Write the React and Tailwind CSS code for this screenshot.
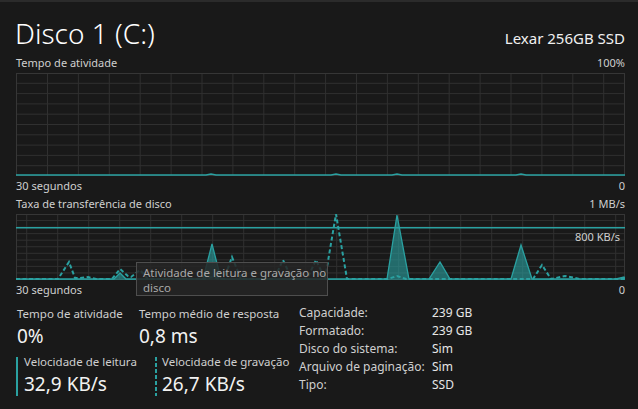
import React from "react";

const TEAL = "#2aa1a1";

function Chart1() {
  const W = 609, H = 103;
  const vx = Array.from({ length: 19 }, (_, k) => 31.5 + 30.9 * k);
  const hy = Array.from({ length: 9 }, (_, k) => 10.3 * (k + 1));
  return (
    <svg width={W} height={H} className="block">
      {vx.map((x, i) => (
        <line key={"v" + i} x1={x} x2={x} y1={0} y2={H} stroke="#303030" strokeWidth="1" />
      ))}
      {hy.map((y, i) => (
        <line key={"h" + i} x1={0} x2={W} y1={y} y2={y} stroke="#303030" strokeWidth="1" />
      ))}
      <rect x="0.5" y="0.5" width={W - 1} height={H - 1} fill="none" stroke="#363636" />
      <polyline
        points="0,102 190,102 195,101 200,102 315,102 320,101 325,102 376,102 381,101 386,102 500,102 505,101 510,102 609,102"
        fill="rgba(42,161,161,0.5)"
        stroke={TEAL}
        strokeWidth="1.3"
      />
    </svg>
  );
}

function Chart2() {
  const W = 609, H = 66;
  const vx = Array.from({ length: 20 }, (_, k) => 10.7 + 31 * k);
  const hy = Array.from({ length: 9 }, (_, k) => 6.55 * (k + 1));
  const dashed =
    "0,65 42,65 53,48 59,64 64,64 72,63 80,65 96,65 104,55 112,62 115,63 124,56 132,65 189,65 196,63 204,65 208,65 216,43 225,65 258,65 267,46 276,65 291,65 300,46 309,65 320,0 331,65 372,65 381,62 390,65 517,65 526,51 535,65 549,62 564,65 609,65";
  const solid =
    "0,65 98,65 104,59 110,65 187,65 196,30 205,65 371,65 381,1 393,65 413,65 424,48 434,65 495,65 505,31 516,65 600,65 608,63 609,65";
  return (
    <svg width={W} height={H} className="block">
      {vx.map((x, i) => (
        <line key={"v" + i} x1={x} x2={x} y1={0} y2={H} stroke="#303030" strokeWidth="1" />
      ))}
      {hy.map((y, i) => (
        <line key={"h" + i} x1={0} x2={W} y1={y} y2={y} stroke="#303030" strokeWidth="1" />
      ))}
      <rect x="0.5" y="0.5" width={W - 1} height={H - 1} fill="none" stroke="#363636" />
      <line x1="0" x2={W} y1="13.7" y2="13.7" stroke={TEAL} strokeWidth="1.6" />
      <polygon points={solid + " 609,66 0,66"} fill="rgba(42,161,161,0.6)" stroke="none" />
      <polyline points={solid} fill="none" stroke={TEAL} strokeWidth="1.3" />
      <polyline points={dashed} fill="none" stroke={TEAL} strokeWidth="2" strokeDasharray="4 2.5" />
    </svg>
  );
}

export default function App() {
  return (
    <div
      className="w-[638px] h-[409px] overflow-hidden bg-[#191919] border-t-2 border-[#2b2b2b] pl-[16px] pr-[13px] text-[#cfcfcf]"
      style={{ fontFamily: '"Noto Sans", "Open Sans", sans-serif' }}
    >
      {/* Header */}
      <div className="flex items-baseline justify-between pt-[15px]">
        <div className="text-[28px] leading-[32px] font-light text-white -ml-[1px]">Disco 1 (C:)</div>
        <div className="text-[15px] leading-[18px] text-[#f0f0f0]">Lexar 256GB SSD</div>
      </div>

      <div className="mt-[8px] flex justify-between text-[11px] leading-[12px]">
        <span>Tempo de atividade</span>
        <span>100%</span>
      </div>
      <div className="mt-[4px]">
        <Chart1 />
      </div>
      <div className="mt-[3.5px] flex justify-between text-[11px] leading-[12px]">
        <span>30 segundos</span>
        <span>0</span>
      </div>

      <div className="mt-[6px] flex justify-between text-[11px] leading-[12px]">
        <span>Taxa de transferência de disco</span>
        <span>1 MB/s</span>
      </div>
      <div className="relative mt-[4.5px]">
        <Chart2 />
        <div className="absolute right-[5px] top-[17px] text-[11px] leading-[12px]">800 KB/s</div>
        <div className="absolute left-[120px] top-[48px] w-[192px] h-[34px] bg-[rgba(38,38,38,0.85)] border border-[#4e4e4e] px-[6px] pt-[2px] text-[11.5px] leading-[15px] text-[#a9a9a9] whitespace-nowrap">
          Atividade de leitura e gravação no
          <br />
          disco
        </div>
      </div>
      <div className="mt-[3.5px] flex justify-between text-[11px] leading-[12px]">
        <span>30 segundos</span>
        <span>0</span>
      </div>

      {/* Bottom stats */}
      <div className="mt-[8.5px] flex items-start">
        <div className="w-[283px] pt-[2.6px]">
          <div className="flex">
            <div className="w-[123px] pl-[1px]">
              <div className="text-[11.5px] leading-[14px]">Tempo de atividade</div>
              <div className="mt-[3.4px] text-[19px] leading-[24px] text-[#f2f2f2]">0%</div>
            </div>
            <div>
              <div className="text-[11.5px] leading-[14px]">Tempo médio de resposta</div>
              <div className="mt-[3.4px] text-[19px] leading-[24px] text-[#f2f2f2]">0,8 ms</div>
            </div>
          </div>
          <div className="mt-[9.3px] flex">
            <div className="w-[139px] flex">
              <div className="w-[2px] bg-[#2aa1a1]" />
              <div className="pl-[6px]">
                <div className="text-[11.5px] leading-[10px]">Velocidade de leitura</div>
                <div className="mt-[4.5px] text-[19px] leading-[24px] text-[#f2f2f2]">32,9 KB/s</div>
              </div>
            </div>
            <div className="flex">
              <div className="w-[2px] bg-[repeating-linear-gradient(to_bottom,#2aa1a1_0px,#2aa1a1_4px,transparent_4px,transparent_6px)]" />
              <div className="pl-[5px]">
                <div className="text-[11.5px] leading-[10px]">Velocidade de gravação</div>
                <div className="mt-[4.5px] text-[19px] leading-[24px] text-[#f2f2f2]">26,7 KB/s</div>
              </div>
            </div>
          </div>
        </div>
        <div className="text-[12px] leading-[18px]">
          {[
            ["Capacidade:", "239 GB"],
            ["Formatado:", "239 GB"],
            ["Disco do sistema:", "Sim"],
            ["Arquivo de paginação:", "Sim"],
            ["Tipo:", "SSD"],
          ].map(([k, v]) => (
            <div key={k} className="flex">
              <span className="w-[133px]">{k}</span>
              <span className="text-[#e6e6e6]">{v}</span>
            </div>
          ))}
        </div>
      </div>
    </div>
  );
}
